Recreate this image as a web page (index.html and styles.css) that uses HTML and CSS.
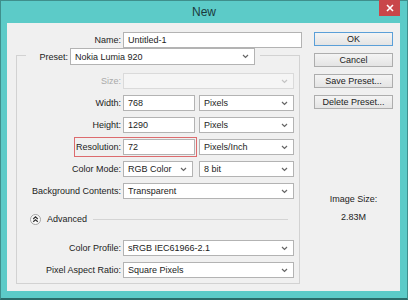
FILE: index.html
```html
<!DOCTYPE html>
<html lang="en">
<head>
    <meta charset="UTF-8">
    <title>New</title>
    <link rel="stylesheet" href="styles.css">
</head>
<body>
    <div class="window">
        <div class="titlebar">
            <span class="title">New</span>
            <span class="close">
                <svg width="8" height="8" viewBox="0 0 8 8"><path d="M1 1L7 7M7 1L1 7" stroke="#fff" stroke-width="1.6"/></svg>
            </span>
        </div>
        <div class="client">
            <div class="main">
                <div class="row">
                    <span class="lbl name-lbl">Name:</span>
                    <div class="input w-name">Untitled-1</div>
                </div>
                <div class="group">
                    <div class="legend">
                        <span class="lbl">Preset:</span>
                        <div class="select w-preset">Nokia Lumia 920<svg class="chev" width="7" height="5" viewBox="0 0 7 5"><polyline points="1,1 3.5,3.5 6,1"/></svg></div>
                    </div>
                    <div class="row first">
                        <span class="lbl muted">Size:</span>
                        <div class="select disabled w-full"><svg class="chev" width="7" height="5" viewBox="0 0 7 5"><polyline points="1,1 3.5,3.5 6,1"/></svg></div>
                    </div>
                    <div class="row">
                        <span class="lbl">Width:</span>
                        <div class="input w-num">768</div>
                        <div class="select w-unit">Pixels<svg class="chev" width="7" height="5" viewBox="0 0 7 5"><polyline points="1,1 3.5,3.5 6,1"/></svg></div>
                    </div>
                    <div class="row">
                        <span class="lbl">Height:</span>
                        <div class="input w-num">1290</div>
                        <div class="select w-unit">Pixels<svg class="chev" width="7" height="5" viewBox="0 0 7 5"><polyline points="1,1 3.5,3.5 6,1"/></svg></div>
                    </div>
                    <div class="row">
                        <div class="hl">
                            <span class="lbl">Resolution:</span>
                            <div class="input w-num">72</div>
                        </div>
                        <div class="select w-unit">Pixels/Inch<svg class="chev" width="7" height="5" viewBox="0 0 7 5"><polyline points="1,1 3.5,3.5 6,1"/></svg></div>
                    </div>
                    <div class="row">
                        <span class="lbl">Color Mode:</span>
                        <div class="select w-mode">RGB Color<svg class="chev" width="7" height="5" viewBox="0 0 7 5"><polyline points="1,1 3.5,3.5 6,1"/></svg></div>
                        <div class="select w-unit">8 bit<svg class="chev" width="7" height="5" viewBox="0 0 7 5"><polyline points="1,1 3.5,3.5 6,1"/></svg></div>
                    </div>
                    <div class="row">
                        <span class="lbl">Background Contents:</span>
                        <div class="select w-full">Transparent<svg class="chev" width="7" height="5" viewBox="0 0 7 5"><polyline points="1,1 3.5,3.5 6,1"/></svg></div>
                    </div>
                    <div class="row adv">
                        <svg class="adv-icon" width="11" height="11" viewBox="0 0 11 11">
                            <circle cx="5.5" cy="5.5" r="5" fill="#fafafa" stroke="#a3a3a3"/>
                            <polyline points="3.2,5 5.5,2.9 7.8,5" fill="none" stroke="#333" stroke-width="1.2"/>
                            <polyline points="3.2,7.8 5.5,5.7 7.8,7.8" fill="none" stroke="#333" stroke-width="1.2"/>
                        </svg>
                        <span class="adv-text">Advanced</span>
                        <span class="rule"></span>
                    </div>
                    <div class="row profile">
                        <span class="lbl">Color Profile:</span>
                        <div class="select w-full">sRGB IEC61966-2.1<svg class="chev" width="7" height="5" viewBox="0 0 7 5"><polyline points="1,1 3.5,3.5 6,1"/></svg></div>
                    </div>
                    <div class="row">
                        <span class="lbl">Pixel Aspect Ratio:</span>
                        <div class="select w-full">Square Pixels<svg class="chev" width="7" height="5" viewBox="0 0 7 5"><polyline points="1,1 3.5,3.5 6,1"/></svg></div>
                    </div>
                </div>
            </div>
            <div class="side">
                <button class="btn default">OK</button>
                <button class="btn">Cancel</button>
                <button class="btn">Save Preset...</button>
                <button class="btn">Delete Preset...</button>
                <div class="size-info">
                    <div>Image Size:</div>
                    <div>2.83M</div>
                </div>
            </div>
        </div>
    </div>
</body>
</html>
```

FILE: styles.css
```css
* {
    box-sizing: border-box;
}
body {
    margin: 0;
    font-family: "Liberation Sans", Arial, sans-serif;
    font-size: 9px;
    color: #1c1c1c;
}
.window {
    width: 408px;
    height: 300px;
    background: #5ccbc8;
    border: 1px solid #3f8f8c;
    border-bottom: 2px solid #2b6b69;
    display: flex;
    flex-direction: column;
}
.titlebar {
    height: 22px;
    display: grid;
    grid-template-columns: 1fr auto 1fr;
}
.title {
    grid-column: 2;
    line-height: 22px;
    font-size: 12px;
    color: #1b3a3d;
}
.close {
    grid-column: 3;
    justify-self: end;
    align-self: start;
    width: 21px;
    height: 16px;
    margin: -1px 7px 0 0;
    background: #c9474a;
    display: flex;
    align-items: center;
    justify-content: center;
}
.client {
    flex: 1;
    margin: 0 7px 7px 6px;
    background: #f0f0f0;
    display: flex;
}
.main {
    width: 296px;
    padding-top: 9px;
}
.row {
    display: flex;
    align-items: center;
    height: 16px;
}
.lbl {
    flex: none;
    text-align: right;
    white-space: nowrap;
}
.muted {
    color: #a9a9a9;
}
.name-lbl {
    width: 114px;
    margin-right: 2px;
}
.input,
.select {
    flex: none;
    height: 16px;
    background: #fff;
    border: 1px solid #b3b3b3;
    padding-left: 4px;
    line-height: 14px;
    white-space: nowrap;
}
.select {
    display: flex;
    justify-content: space-between;
    align-items: center;
    padding-right: 5px;
}
.chev polyline {
    fill: none;
    stroke: #666;
    stroke-width: 1.2;
}
.select.disabled {
    background: #f5f5f5;
    border-color: #dadada;
    justify-content: flex-end;
}
.select.disabled .chev polyline {
    stroke: #c4c4c4;
}
.w-name { width: 179px; }
.w-preset { width: 185px; height: 17px; }
.w-full { width: 171px; }
.w-num { width: 72px; margin-right: 4px; }
.w-unit { width: 95px; }
.w-mode { width: 70px; margin-right: 6px; }

.group {
    margin: 7px 0 0 9px;
    width: 284px;
    border: 1px solid #d2d2d2;
    padding-bottom: 5px;
}
.legend {
    margin: -8px 0 0 9px;
    padding-right: 5px;
    width: fit-content;
    height: 17px;
    background: #f0f0f0;
    display: flex;
    align-items: center;
}
.legend .lbl {
    width: 42px;
    margin-right: 2px;
}
.group .row {
    margin-top: 6px;
}
.group .row.first {
    margin-top: 8px;
}
.group .row .lbl {
    width: 104px;
    margin-right: 2px;
}
.hl {
    display: flex;
    align-items: center;
    margin: -2px 2px -2px 57px;
    padding: 1px 1px 1px 0;
    border: 1px solid #dd6b6e;
}
.group .row .hl .lbl {
    width: 46px;
}
.hl .w-num {
    margin-right: 0;
}
.group .row.adv {
    margin-top: 12px;
    padding-left: 13px;
}
.adv-text {
    margin-left: 6px;
}
.rule {
    flex: 1;
    height: 1px;
    background: #d4d4d4;
    margin: 0 11px 0 6px;
}
.group .row.profile {
    margin-top: 13px;
}

.side {
    margin-left: 11px;
    width: 79px;
    padding-top: 9px;
    display: flex;
    flex-direction: column;
}
.btn {
    height: 14px;
    margin: 0 0 7px;
    padding: 0;
    font: inherit;
    color: #1c1c1c;
    line-height: 12px;
    border: 1px solid #adadad;
    background: linear-gradient(#f4f4f4, #e4e4e4);
}
.btn.default {
    border-color: #5a9fd8;
}
.size-info {
    margin-top: 74px;
    text-align: center;
    line-height: 18px;
}
```
